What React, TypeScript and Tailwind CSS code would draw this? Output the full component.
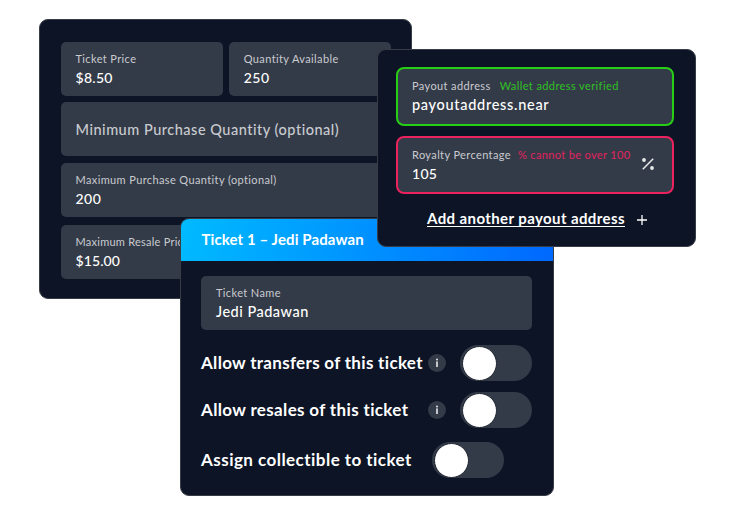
import type { ReactNode } from 'react';

type FieldProps = {
  label: string;
  labelClass?: string;
  value: string;
  valueClass?: string;
  className?: string;
  note?: ReactNode;
};

function Field({ label, labelClass = 'tracking-[0.38px]', value, valueClass = 'pb-[2px] text-[14px] tracking-[0.3px]', className = 'pl-[14.5px]', note }: FieldProps) {
  return (
    <div className={`flex h-[54px] flex-col rounded-[5px] bg-[#343b48] pt-[9px] ${className}`}>
      <div className="flex h-[15px] items-center text-[11px] leading-[15px] whitespace-nowrap">
        <span className={`text-[#c9cbd0] ${labelClass}`}>{label}</span>
        {note}
      </div>
      <div className={`mt-[3px] flex h-[18px] items-center font-medium whitespace-nowrap text-white ${valueClass}`}>
        {value}
      </div>
    </div>
  );
}

function Toggle() {
  return (
    <button type="button" className="flex h-[36px] w-[72px] items-center rounded-full bg-[#343b48] pl-[2px]">
      <span className="size-[35px] rounded-full border border-[#1d2330] bg-white" />
    </button>
  );
}

function Info() {
  return (
    <span className="flex size-[18px] items-center justify-center rounded-full bg-[#343b48]">
      <svg width="4" height="10" viewBox="0 0 4 10" fill="#e8e9eb">
        <circle cx="2" cy="1.5" r="1" />
        <rect x="1.2" y="3.4" width="1.6" height="5.6" />
      </svg>
    </span>
  );
}

const card = 'absolute overflow-hidden rounded-[9px] border border-[#383c45] bg-[#0c1425]';

export default function App() {
  return (
    <main className="relative h-[515px] w-[735px] overflow-hidden bg-white font-['Lato','Liberation_Sans',sans-serif]">
      <section className={`${card} top-[19px] left-[39px] h-[280px] w-[373px] pt-[22px] pr-[20px] pl-[21px]`}>
        <div className="flex gap-[6.5px]">
          <Field className="w-[162px] pl-[14.5px]" label="Ticket Price" value="$8.50" />
          <Field className="w-[162px] pl-[14.5px]" label="Quantity Available" value="250" valueClass="pb-[2px] text-[14px] tracking-[0.5px]" />
        </div>
        <div className="mt-[6px] flex h-[54px] items-center rounded-[5px] bg-[#343b48] pt-px pl-[14.5px] text-[14.5px] font-medium tracking-[0.51px] whitespace-nowrap text-[#c9cbd0]">
          Minimum Purchase Quantity (optional)
        </div>
        <Field className="mt-[7px] pl-[14.5px]" label="Maximum Purchase Quantity (optional)" value="200" valueClass="pb-[2px] text-[14px] tracking-[0.5px]" />
        <Field className="mt-[8px] pl-[14.5px]" label="Maximum Resale Price" labelClass="tracking-[0.25px]" value="$15.00" valueClass="pb-[2px] text-[14px] tracking-[0.1px]" />
      </section>

      <section className={`${card} top-[218px] left-[180px] h-[278px] w-[374px]`}>
        <header className="-mx-px -mt-px flex h-[43px] items-center bg-linear-[100deg] from-[#00bbff] to-[#0068ff] pb-px pl-[21.5px] text-[15px] font-bold tracking-[0.1px] text-white">
          Ticket 1 – Jedi Padawan
        </header>
        <div className="pt-[15px] pr-[21px] pl-[20px]">
          <Field label="Ticket Name" value="Jedi Padawan" valueClass="pb-px text-[14.5px] tracking-[0.5px]" className="pl-[15px]" />
          <div className="mt-[15px] flex h-[36px] items-center text-[17px] font-bold whitespace-nowrap text-white">
            <span className="w-[227px] tracking-[0.31px]">Allow transfers of this ticket</span>
            <Info />
            <span className="ml-auto"><Toggle /></span>
          </div>
          <div className="mt-[11px] flex h-[36px] items-center text-[17px] font-bold whitespace-nowrap text-white">
            <span className="w-[227px] tracking-[0.35px]">Allow resales of this ticket</span>
            <Info />
            <span className="ml-auto"><Toggle /></span>
          </div>
          <div className="mt-[14px] flex h-[36px] items-center text-[17px] font-bold whitespace-nowrap text-white">
            <span className="w-[231px] tracking-[0.46px]">Assign collectible to ticket</span>
            <Toggle />
          </div>
        </div>
      </section>

      <section className={`${card} top-[49px] left-[377px] h-[198px] w-[319px] pt-[17px] pr-[21px] pl-[18px]`}>
        <Field
          className="h-[59px] rounded-[8px] border-2 border-[#28cd16] pl-[14px]"
          label="Payout address"
          value="payoutaddress.near"
          valueClass="text-[14.5px] tracking-[0.7px]"
          note={<span className="ml-[9px] tracking-[0.4px] text-[#2fc024]">Wallet address verified</span>}
        />
        <div className="relative mt-[10px]">
          <Field
            className="h-[58px] rounded-[8px] border-2 border-[#ea225f] pl-[14px]"
            label="Royalty Percentage"
            value="105"
            note={<span className="ml-[7px] tracking-[0.35px] text-[#e2225f]">% cannot be over 100</span>}
          />
          <svg className="absolute top-[21px] right-[19px]" width="14" height="14" viewBox="0 0 14 14" fill="none" stroke="#e8e9eb">
            <path d="M1.8 12.2 12.2 1.8" strokeWidth="1.5" />
            <circle cx="3" cy="3" r="1.9" fill="#e8e9eb" stroke="none" />
            <circle cx="11" cy="11" r="1.9" fill="#e8e9eb" stroke="none" />
          </svg>
        </div>
        <div className="mt-[16px] flex items-center pl-[31px] text-white">
          <a className="border-b border-white text-[15px] leading-[16px] font-bold tracking-[0.4px] whitespace-nowrap">Add another payout address</a>
          <svg className="mt-[2px] ml-[12px]" width="10" height="10" viewBox="0 0 10 10" stroke="white" strokeWidth="1.3">
            <path d="M5 0v10M0 5h10" />
          </svg>
        </div>
      </section>
    </main>
  );
}
